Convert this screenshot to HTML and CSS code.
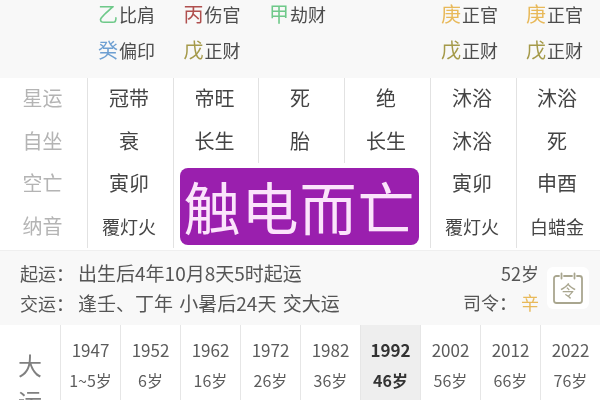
FILE: index.html
```html
<!DOCTYPE html>
<html lang="zh">
<head>
<meta charset="utf-8">
<title>大运</title>
<link rel="stylesheet" href="styles.css">
</head>
<body>
<div class="page">
  <section class="hidden-gan">
    <div></div>
    <div class="gan-cell"><p><b class="green">乙</b>比肩</p><p><b class="blue">癸</b>偏印</p></div>
    <div class="gan-cell"><p><b class="red">丙</b>伤官</p><p><b class="olive">戊</b>正财</p></div>
    <div class="gan-cell"><p><b class="green">甲</b>劫财</p></div>
    <div class="gan-cell"></div>
    <div class="gan-cell"><p><b class="gold">庚</b>正官</p><p><b class="olive">戊</b>正财</p></div>
    <div class="gan-cell"><p><b class="gold">庚</b>正官</p><p><b class="olive">戊</b>正财</p></div>
  </section>

  <section class="pillars">
    <div class="lab">星运</div><div class="c">冠带</div><div class="c">帝旺</div><div class="c">死</div><div class="c">绝</div><div class="c">沐浴</div><div class="c">沐浴</div>
    <div class="lab">自坐</div><div class="c">衰</div><div class="c">长生</div><div class="c">胎</div><div class="c">长生</div><div class="c">沐浴</div><div class="c">死</div>
    <div class="lab">空亡</div><div class="c">寅卯</div><div class="c"></div><div class="c nb"></div><div class="c nb"></div><div class="c">寅卯</div><div class="c">申酉</div>
    <div class="lab">纳音</div><div class="c sm">覆灯火</div><div class="c"></div><div class="c nb"></div><div class="c nb"></div><div class="c sm">覆灯火</div><div class="c sm">白蜡金</div>
    <div class="banner">触电而亡</div>
  </section>

  <section class="info">
    <div class="info-text">
      <p>起运：&nbsp;<span class="val">出生后4年10月8天5时起运</span></p>
      <p>交运：&nbsp;<span class="val">逢壬、丁年 小暑后24天 交大运</span></p>
    </div>
    <div class="info-side">
      <p>52岁</p>
      <p>司令：&nbsp;<b class="gold">辛</b></p>
    </div>
    <div class="cal">
      <svg width="32" height="34" viewBox="0 0 32 34" fill="none" stroke="#a9a68f" stroke-width="1.8" stroke-linecap="round" stroke-linejoin="round">
        <path d="M7 5H4.500A2.500 2.500 0 0 0 2 7.500v22A2.500 2.500 0 0 0 4.500 32h23a2.500 2.500 0 0 0 2.500-2.500v-22A2.500 2.500 0 0 0 27.500 5H25"/>
        <path d="M12 5h8M9.500 2.500v5M22.500 2.500v5"/>
      </svg>
      <span class="cal-t">令</span>
    </div>
  </section>

  <section class="dayun">
    <div class="dy-lab">大<br>运</div>
    <div class="dy"><span>1947</span><span class="age">1~5岁</span></div>
    <div class="dy"><span>1952</span><span class="age">6岁</span></div>
    <div class="dy"><span>1962</span><span class="age">16岁</span></div>
    <div class="dy"><span>1972</span><span class="age">26岁</span></div>
    <div class="dy"><span>1982</span><span class="age">36岁</span></div>
    <div class="dy on"><span>1992</span><span class="age">46岁</span></div>
    <div class="dy"><span>2002</span><span class="age">56岁</span></div>
    <div class="dy"><span>2012</span><span class="age">66岁</span></div>
    <div class="dy"><span>2022</span><span class="age">76岁</span></div>
  </section>
</div>
</body>
</html>
```

FILE: styles.css
```css
* { box-sizing: border-box; }
html, body { margin: 0; padding: 0; }
body {
  width: 600px;
  height: 400px;
  overflow: hidden;
  background: #fff;
  font-family: "Noto Sans CJK SC", "Noto Sans", sans-serif;
  color: #4a4a4a;
}
p { margin: 0; }
b { font-weight: 400; }
.page { width: 600px; height: 400px; overflow: hidden; filter: blur(0.3px); }

.hidden-gan {
  height: 78px;
  background: #f8f8f8;
  display: grid;
  grid-template-columns: 87px 86px 85px 86px 86px 86px 84px;
}
.gan-cell {
  display: flex;
  flex-direction: column;
  align-items: center;
  padding-right: 7px;
  font-size: 18px;
  line-height: 35px;
  color: #4c4c4c;
  margin-top: -4px;
}
.gan-cell p { white-space: nowrap; }
.gan-cell b { font-size: 20px; margin-right: 1px; }
.green { color: #6fc98a; }
.blue { color: #6d9fd2; }
.red { color: #b0504f; }
.olive { color: #a59a4a; }
.gold { color: #e8b95a; }

.pillars {
  position: relative;
  height: 170px;
  display: grid;
  grid-template-columns: 87px 86px 85px 86px 86px 86px 84px;
  grid-auto-rows: 42.500px;
  background: #fff;
}
.lab {
  display: flex;
  align-items: center;
  justify-content: center;
  font-size: 20px;
  color: #b4b4b4;
  padding: 0 2px 3px 0;
}
.c {
  display: flex;
  align-items: center;
  justify-content: center;
  font-size: 20px;
  color: #444;
  border-left: 1px solid #e2e2e2;
  padding: 0 3px 3px 0;
}
.c.nb { border-left: 0; }
.c.sm { font-size: 18px; padding-bottom: 1px; }
.banner {
  position: absolute;
  left: 180px;
  top: 90px;
  width: 239px;
  height: 77px;
  background: #9a1fae;
  border-radius: 8px;
  color: #fbe4fb;
  font-size: 57px;
  line-height: 74px;
  text-align: center;
  white-space: nowrap;
  letter-spacing: 1px;
}

.info {
  margin-top: 2px;
  height: 75px;
  background: #f8f8f8;
  border-top: 1px solid #efefef;
  display: flex;
  align-items: center;
  padding: 0 11px 0 20px;
  font-size: 18px;
  line-height: 29px;
  color: #555;
}
.info-text { flex: 1; white-space: nowrap; }
.val { font-size: 19px; word-spacing: 2px; }
.info-side { text-align: right; white-space: nowrap; margin-right: 8px; }
.info-side .gold { font-size: 18px; }
.cal {
  position: relative;
  width: 42px;
  height: 42px;
  background: #fff;
  border-radius: 6px;
  display: flex;
  align-items: center;
  justify-content: center;
}
.cal-t {
  position: absolute;
  left: 0;
  right: 0;
  top: 8px;
  text-align: center;
  font-size: 16px;
  line-height: 30px;
  color: #a9a68f;
}

.dayun {
  height: 80px;
  display: grid;
  grid-template-columns: repeat(10, 60px);
  background: #fff;
}
.dy-lab {
  font-size: 24px;
  line-height: 36px;
  color: #808080;
  text-align: center;
  padding-top: 22px;
}
.dy {
  display: flex;
  flex-direction: column;
  align-items: center;
  border-left: 1px solid #e6e6e6;
  padding-top: 10px;
  font-size: 17px;
  line-height: 30px;
  color: #5c5c5c;
  white-space: nowrap;
}
.age { font-size: 16px; }
.dy.on {
  background: #eeeeee;
  color: #333;
  font-weight: 700;
}
```
